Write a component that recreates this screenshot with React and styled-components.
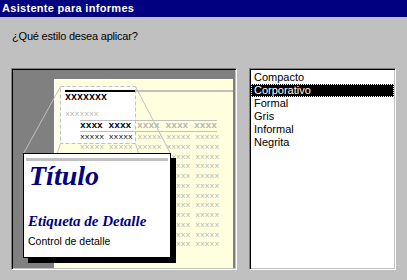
import React from 'react';
import styled, { createGlobalStyle } from 'styled-components';

const GlobalStyle = createGlobalStyle`
  html, body {
    margin: 0;
    background: #c0c0c0;
  }
  body {
    font-family: "Liberation Sans", Arial, sans-serif;
    font-size: 11px;
    color: #000;
  }
`;

const STYLES = ['Compacto', 'Corporativo', 'Formal', 'Gris', 'Informal', 'Negrita'];
const DATA_ROWS = 12;

const Window = styled.div`
  width: 407px;
  height: 280px;
  background: #c0c0c0;
  overflow: hidden;
`;

const TitleBar = styled.div`
  height: 17px;
  line-height: 17px;
  padding-left: 2px;
  background: #000080;
  color: #fff;
  font-weight: bold;
  font-size: 11px;
  letter-spacing: 0.3px;
`;

const Body = styled.div`
  padding: 0 11px;
`;

const Question = styled.div`
  margin-top: 13px;
  height: 13px;
  line-height: 13px;
  padding-left: 1px;
  letter-spacing: -0.2px;
`;

const Main = styled.div`
  display: flex;
  gap: 12px;
  margin-top: 25px;
`;

const Sunken = styled.div`
  box-sizing: border-box;
  height: 202px;
  border: 1px solid;
  border-color: #808080 #fff #fff #808080;
  box-shadow: inset 1px 1px 0 #000, inset -1px -1px 0 #c0c0c0;
`;

const Frame = styled(Sunken)`
  position: relative;
  width: 226px;
  display: flex;
  flex-direction: column;
  padding: 10px 3px 1px 42px;
  background: #808080;
`;

const Paper = styled.div`
  position: relative;
  flex: 1;
  padding: 11px 0 0 11px;
  background: #ffffe0;
  box-shadow: inset 1px 1px 0 #fff;
`;

const Zone = styled.div`
  position: absolute;
  left: 6px;
  top: 7px;
  width: 76px;
  height: 58px;
  background: #fff;
`;

const Content = styled.div`
  position: relative;
`;

const Rule = styled.div`
  display: flex;
  height: 2px;
  &::before {
    content: '';
    width: 70px;
    background: #000;
  }
  &::after {
    content: '';
    flex: 1;
    background: #c0c0c0;
  }
`;

const Mono = styled.div`
  font-family: "Liberation Mono", "Courier New", monospace;
  white-space: pre;
`;

const ReportTitle = styled(Mono)`
  margin-top: 1px;
  font-size: 10px;
  line-height: 10px;
  font-weight: bold;
`;

const GroupLabel = styled(Mono)`
  margin-top: 6px;
  font-size: 8px;
  line-height: 10px;
  color: #b4b4b4;
`;

const Header = styled(Mono)`
  margin: 1px 0 0 15px;
  width: 137px;
  border-top: 1px solid #c0c0c0;
  border-bottom: 1px solid #c0c0c0;
  font-size: 9.5px;
  line-height: 10px;
  font-weight: bold;
  color: #b4b4b4;
`;

const DataRow = styled(Mono)`
  margin-left: 15px;
  font-size: 8px;
  line-height: 9.75px;
  color: #b4b4b4;
`;

const Ink = styled.span`
  color: #000;
`;

const Guides = styled.svg`
  position: absolute;
  left: 0;
  top: 0;
  width: 224px;
  height: 200px;
  pointer-events: none;
`;

const Callout = styled.div`
  position: absolute;
  left: 11px;
  top: 84px;
  box-sizing: border-box;
  width: 148px;
  height: 105px;
  padding: 4px 2px 0 2px;
  background: #fff;
  border: 1px solid #000;
  box-shadow: 5px 5px 0 #000;
`;

const CalloutBar = styled.div`
  height: 3px;
  background: #c0c0c0;
`;

const CalloutTitle = styled.div`
  margin-left: 3px;
  font-family: "Liberation Serif", "Times New Roman", serif;
  font-style: italic;
  font-weight: bold;
  font-size: 28px;
  line-height: 30px;
  color: #000080;
`;

const CalloutLabel = styled.div`
  margin: 22px 0 0 2px;
  font-family: "Liberation Serif", "Times New Roman", serif;
  font-style: italic;
  font-weight: bold;
  font-size: 15px;
  line-height: 17px;
  color: #000080;
`;

const CalloutControl = styled.div`
  margin: 5px 0 0 2px;
  font-size: 10.5px;
  line-height: 12px;
`;

const ListBox = styled(Sunken)`
  width: 147px;
  padding: 2px 1px 0 1px;
  background: #fff;
`;

const Item = styled.div`
  box-sizing: border-box;
  height: 13px;
  line-height: 13px;
  padding-left: 3px;
  background: ${(p) => (p.$selected ? '#000' : 'transparent')};
  color: ${(p) => (p.$selected ? '#fff' : '#000')};
  outline: ${(p) => (p.$selected ? '1px dotted #fff' : 'none')};
  outline-offset: -1px;
`;

const Preview = () => (
  <Frame>
    <Paper>
      <Zone />
      <Content>
        <Rule />
        <ReportTitle>xxxxxxx</ReportTitle>
        <GroupLabel>xxxxxxx</GroupLabel>
        <Header>
          <Ink>xxxx xxxx</Ink> xxxx xxxx xxxx
        </Header>
        {Array.from({ length: DATA_ROWS }, (_, i) =>
          i === 0 ? (
            <DataRow key={i}>
              <Ink>xxxxx xxxxx</Ink> xxxxx xxxxx xxxxx
            </DataRow>
          ) : (
            <DataRow key={i}>xxxxx xxxxx xxxxx xxxxx xxxxx</DataRow>
          )
        )}
      </Content>
    </Paper>
    <Guides viewBox="0 0 224 200">
      <g stroke="#c0c0c0" strokeWidth="1" fill="none">
        <line x1="48.5" y1="17.5" x2="11.5" y2="84.5" />
        <line x1="123.5" y1="17.5" x2="158.5" y2="84.5" />
        <line x1="48.5" y1="74.5" x2="11.5" y2="188.5" />
        <line x1="123.5" y1="74.5" x2="158.5" y2="188.5" />
        <rect x="48.5" y="17.5" width="75" height="57" strokeDasharray="4 2" />
      </g>
    </Guides>
    <Callout>
      <CalloutBar />
      <CalloutTitle>Título</CalloutTitle>
      <CalloutLabel>Etiqueta de Detalle</CalloutLabel>
      <CalloutControl>Control de detalle</CalloutControl>
    </Callout>
  </Frame>
);

export default function App() {
  return (
    <Window>
      <GlobalStyle />
      <TitleBar>Asistente para informes</TitleBar>
      <Body>
        <Question>¿Qué estilo desea aplicar?</Question>
        <Main>
          <Preview />
          <ListBox>
            {STYLES.map((s) => (
              <Item key={s} $selected={s === 'Corporativo'}>
                {s}
              </Item>
            ))}
          </ListBox>
        </Main>
      </Body>
    </Window>
  );
}
